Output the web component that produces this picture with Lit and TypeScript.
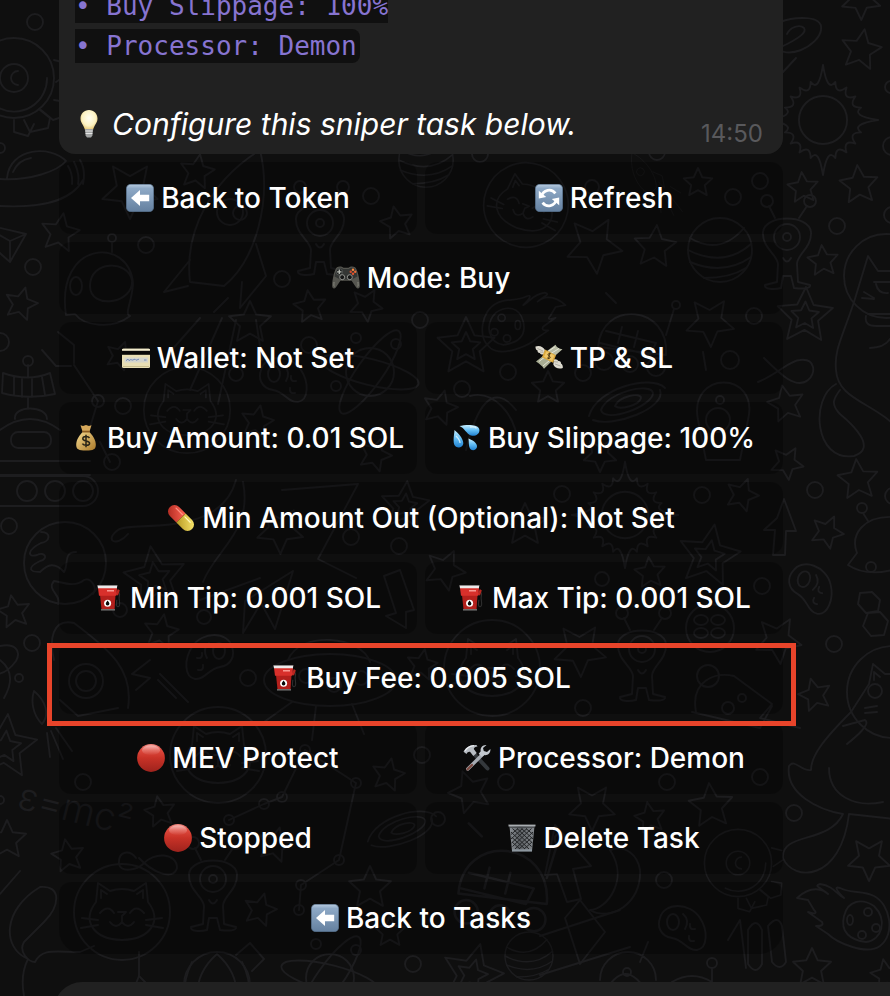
import { LitElement, html, css, svg } from "lit";
import { customElement } from "lit/decorators.js";
import { classMap } from "lit/directives/class-map.js";

type Icon = "back" | "refresh" | "gamepad" | "card" | "money" | "bag" | "drops" | "pill" | "pump" | "red" | "tools" | "bin" | "bulb";
interface Action { icon: Icon; label: string }
interface Row { actions: Action[]; marked?: boolean }

const ROWS: Row[] = [
  { actions: [{ icon: "back", label: "Back to Token" }, { icon: "refresh", label: "Refresh" }] },
  { actions: [{ icon: "gamepad", label: "Mode: Buy" }] },
  { actions: [{ icon: "card", label: "Wallet: Not Set" }, { icon: "money", label: "TP & SL" }] },
  { actions: [{ icon: "bag", label: "Buy Amount: 0.01 SOL" }, { icon: "drops", label: "Buy Slippage: 100%" }] },
  { actions: [{ icon: "pill", label: "Min Amount Out (Optional): Not Set" }] },
  { actions: [{ icon: "pump", label: "Min Tip: 0.001 SOL" }, { icon: "pump", label: "Max Tip: 0.001 SOL" }] },
  { actions: [{ icon: "pump", label: "Buy Fee: 0.005 SOL" }], marked: true },
  { actions: [{ icon: "red", label: "MEV Protect" }, { icon: "tools", label: "Processor: Demon" }] },
  { actions: [{ icon: "red", label: "Stopped" }, { icon: "bin", label: "Delete Task" }] },
  { actions: [{ icon: "back", label: "Back to Tasks" }] },
];

const tile = svg`
  <linearGradient id="tile" x1="0" y1="0" x2="0" y2="1">
    <stop offset="0" stop-color="#b9cce0"/><stop offset=".15" stop-color="#8ea9c6"/><stop offset="1" stop-color="#64809f"/>
  </linearGradient>
  <rect x="0.3" y="0.3" width="27.4" height="27.4" rx="4.5" fill="url(#tile)" stroke="#56708d" stroke-width=".6"/>`;

const ICONS: Record<Icon, unknown> = {
  back: svg`${tile}<path d="M5 14 14 6v4.7h9.2v6.6H14V22z" fill="#fff"/>`,
  refresh: svg`${tile}
    <g fill="none" stroke="#fff" stroke-width="2.7"><path d="M6.600 12.400A7.700 7.700 0 0 1 20.400 9.400"/><path d="M21.400 15.600A7.700 7.700 0 0 1 7.600 18.600"/></g>
    <path d="M3.800 6.800v7.600l7.400-1.400z M24.200 21.200v-7.600l-7.400 1.400z" fill="#fff"/>`,
  gamepad: svg`
    <path d="M5 3.2c2-1 5-.8 6.500.6h5C18 2.400 21 2.200 23 3.200c2.500 1.600 5.200 14.400 4.800 19.400-.3 2.400-2.600 2.400-3.800.6L19.600 16.800H8.400L4 23.200c-1.200 1.800-3.500 1.800-3.800-.6C-.2 17.600 2.500 4.800 5 3.200z" fill="#55554f"/>
    <path d="M5.600 4.200c2-.8 4.400-.4 5.600.8h5.600c1.200-1.200 3.600-1.600 5.600-.8 1.800 1.400 2.600 5 3 8.400l-5.600 3H8.200l-5.600-3c.4-3.400 1.200-7 3-8.400z" fill="#343634"/>
    <circle cx="7.300" cy="7.800" r="3.300" fill="#202221" stroke="#777b78" stroke-width=".5"/>
    <path d="M7.300 5.600v4.400M5.100 7.800h4.400" stroke="#b8bbb4" stroke-width="1.300"/>
    <circle cx="21" cy="5.800" r="1.200" fill="#ff8a3c"/><circle cx="18.800" cy="7.800" r="1.200" fill="#d64b2b"/><circle cx="23.200" cy="7.800" r="1.200" fill="#f06c35"/><circle cx="21" cy="9.800" r="1.200" fill="#e84f2c"/>
    <circle cx="10.200" cy="13.200" r="2.500" fill="#151616" stroke="#a8aaa4" stroke-width=".8"/><circle cx="17.800" cy="13.200" r="2.500" fill="#151616" stroke="#a8aaa4" stroke-width=".8"/>
    <path d="M2 18c0 2-.4 4 .3 4.500M26 18c0 2 .4 4-.3 4.500" stroke="#8a8a80" stroke-width="1" fill="none"/>`,
  card: svg`
    <rect x="0" y="4.800" width="28" height="19.200" rx="1.500" fill="#e9dfb4"/>
    <rect x="0" y="4.800" width="28" height="2.500" rx="1" fill="#f4edcd"/><rect x="0" y="6.800" width="28" height="4" fill="#080808"/>
    <rect x="2.500" y="13.500" width="23.500" height="5" fill="#d4d5cd"/>
    <path d="M4 16.600l2-1.500 1 1.500 2-1.200 1 .8 3-1 1 1 3-1M22 16h2.500" stroke="#6b83b5" stroke-width=".9" fill="none"/>
    <path d="M1 22.500h26" stroke="#c9bf8f" stroke-width="1"/>`,
  money: svg`
    <path d="M.5 2.500c4-1.500 8 .4 9.500 3.500l-1 4.500c-2 .4-3.500-.2-4.200-1.500C3 9 2.400 7.800 2.600 6.600 1 6 .3 4.400.5 2.500z" fill="#dedbd0"/>
    <path d="M27.800 24c-4 1.500-8 0-9.500-3.500l.5-5c2-.8 4 .2 4.600 1.600 1.800-.2 2.800 1 2.600 2.400 1.400.8 2 2.600 1.800 4.500z" fill="#dedbd0"/>
    <path d="M10 8.500 20.500.8c1 2.600 3.600 4.200 7 4.500L18 13.500z" fill="#b9bca4"/>
    <path d="M1 17.500 10.500 10l8 5.500-9.500 9.300C7 21.500 4 19.500 1 17.500z" fill="#a9ae94"/>
    <path d="M13 7.500 20 2.800M16 9.500l8-5M4 17.500l7.500-5.800M8 22l8.500-7.200" stroke="#e4e5d6" stroke-width="1" fill="none"/>
    <path d="M10 5.500 21 11.200 18 18.800 7 13.200z" fill="#dba83c"/><path d="M11.400 7.200 19.400 11.400 17 17 9 12.800z" fill="#efc667"/>
    <path d="M15.800 9.800c-1.300-.8-2.900-.3-2.800 1 .2 1.300 2.200 1.300 2.200 2.600-.1 1.200-1.900 1.400-3 .5M14.800 8.700l-1.300 6.200" stroke="#4f3a14" stroke-width="1" fill="none"/>
    <path d="M2.500 4.500 8 7M5 8l3.500.3M25.500 22l-5.500-2M23 18l-4-.3" stroke="#8f8d83" stroke-width=".6"/>`,
  bag: svg`
    <linearGradient id="bag" x1="0" y1="0" x2="1" y2="1"><stop offset="0" stop-color="#f7dc92"/><stop offset="1" stop-color="#a97828"/></linearGradient>
    <path d="M8.500 1.300l2.500.7L14 1l3 1 2.500-.7-2 6.200h-7z" fill="#d6a85a"/>
    <path d="M11 7.500h6c3.500 3.500 7 8.500 6.800 13.500-.2 4.300-2.200 5.500-9.800 5.500S4.400 25.300 4.200 21C4 16 7.500 11 11 7.500z" fill="url(#bag)"/>
    <path d="M10.300 7.600h7.400" stroke="#8b5a1f" stroke-width="1.800"/>
    <path d="M17.500 14c-1.200-2-6.700-2-6.700.7 0 3 6.800 1.500 6.800 4.500 0 2.800-5.800 2.800-7.200.4M14 10.800v12.400" stroke="#292417" stroke-width="1.500" fill="none"/>`,
  drops: svg`
    <linearGradient id="water" x1="0" y1="0" x2="0" y2="1"><stop offset="0" stop-color="#c8efff"/><stop offset=".5" stop-color="#62bdf5"/><stop offset="1" stop-color="#1f7fce"/></linearGradient>
    <path d="M6.500 2c5-1 17-2.500 19.500 2.500 2 5-3.500 8.500-8 7C13.500 10 11.500 4 6.500 2z" fill="url(#water)"/>
    <path d="M1.500 6c3.500 3 9.500 9 8.700 14-.8 4.500-7.500 4.500-9 .5C-.2 16.500 1.300 10 1.500 6z" fill="url(#water)"/>
    <path d="M15.500 14.500c4 1.500 9 4.500 8.500 8.500-.6 3.600-5.600 4.200-7.200 1.300-1.300-2.600-.8-6.500-1.300-9.800z" fill="url(#water)"/>
    <path d="M17 3c3-.5 5.500-.2 6.500 1.300M3 12c2.500 2.500 4 4.500 4 7" stroke="#e6f9ff" stroke-width="1.300" fill="none" opacity=".8"/>`,
  pill: svg`
    <linearGradient id="pr" x1="0" y1="1" x2="1" y2="0"><stop offset="0" stop-color="#a8251c"/><stop offset="1" stop-color="#ff6353"/></linearGradient>
    <linearGradient id="py" x1="0" y1="1" x2="1" y2="0"><stop offset="0" stop-color="#b79a24"/><stop offset="1" stop-color="#ffed73"/></linearGradient>
    <g transform="rotate(45 14 14)"><path d="M14 7.500H4.800a6.500 6.500 0 0 0 0 13H14z" fill="url(#pr)"/><path d="M14 7.500h9.200a6.500 6.500 0 0 1 0 13H14z" fill="url(#py)"/><path d="M3.500 10.500h9" stroke="#ff9184" stroke-width="1.200" stroke-linecap="round"/><path d="M16 10.500h7.500" stroke="#fff8b8" stroke-width="1.200" stroke-linecap="round"/></g>`,
  pump: svg`
    <path d="M22 8c2.500 0 3 1.500 2.300 4-.8 3 .8 6 .3 9-.4 2.300-3 2-3.200-.2l.4-5" fill="none" stroke="#2e2e2e" stroke-width="1.100"/>
    <path d="M20.500 10.500 22.800 5l2 1.500-1.800 5z" fill="#b92720"/>
    <path d="M5 11h15.500l-1 14.500h-13z" fill="#b3201c"/><path d="M3 4h19l-.6 7.800H4z" fill="#d8302b"/>
    <path d="M2.500 1.800h19.800l-.4 2.500H3z" fill="#eceaea"/><path d="M2.500 1.500h19.800" stroke="#8c8787" stroke-width="1"/>
    <path d="M12 6.800h7" stroke="#ffaaa3" stroke-width="1.300"/><path d="M6 25.800h14" stroke="#70706f" stroke-width="1.500"/>
    <circle cx="12.600" cy="19.200" r="3.500" fill="#fff"/><path d="M12.600 16.400c1 1.400 1.800 2.300 1.800 3.300a1.800 1.800 0 0 1-3.600 0c0-1 .8-1.900 1.800-3.300z" fill="#080808"/>`,
  red: svg`
    <linearGradient id="red" x1="0" y1="0" x2="0" y2="1"><stop offset="0" stop-color="#f0867e"/><stop offset=".2" stop-color="#df4a3e"/><stop offset=".5" stop-color="#c83227"/><stop offset="1" stop-color="#9e231d"/></linearGradient>
    <linearGradient id="shine" x1="0" y1="0" x2="0" y2="1"><stop offset="0" stop-color="#fff" stop-opacity=".45"/><stop offset="1" stop-color="#fff" stop-opacity="0"/></linearGradient>
    <circle cx="14" cy="14" r="13.900" fill="url(#red)"/><ellipse cx="14" cy="6.300" rx="9" ry="5" fill="url(#shine)"/>`,
  tools: svg`
    <path d="M12 11 24.500 24.500" stroke="#34383c" stroke-width="4" stroke-linecap="round"/>
    <path d="M20 10 4.800 25" stroke="#a6abb2" stroke-width="3.400" stroke-linecap="round"/><path d="M9 21 4.500 25.300" stroke="#7d4b42" stroke-width="2.400" stroke-linecap="round"/>
    <path d="M.5 7.800C2.500 3.500 7 .5 13.500 1l1 1.500c-2 .3-3.500 1.200-3.700 2.500l2.900 4-3.400 3-3.300-4.200c-1.800-.3-2.500.5-3.500 2.300z" fill="#b6bbc1"/>
    <path d="M2 7c2-3.500 5-5 9-5.300" stroke="#edf0f4" stroke-width="1.200" fill="none"/>
    <path d="M23.500 1c-3.500-.5-6.500 2.500-5.800 6.200l-2 2.600 3 3 2.800-1.700c3.500.4 6.300-2.500 5.900-6.200l-3.400 3-3.200-.8-.8-3z" fill="#c2c8ce"/>`,
  bin: svg`
    <linearGradient id="bin"><stop offset="0" stop-color="#8b9095"/><stop offset=".4" stop-color="#5d6165"/><stop offset="1" stop-color="#85898d"/></linearGradient>
    <path d="M1.500 2h25L24 27H4z" fill="url(#bin)"/>
    <path d="M4.500 4.500l19 18M9 4.500 24.500 19M13.500 4.500 25 15M18 4.500l7 6M3 8l18 17M3.500 13 17 25M4 18l8 7M23.500 4.500l-19 18M19 4.500 3.500 19M14.500 4.500 3 15M10 4.500l-7 6M25 8 7 25M24.500 13 11 25M24 18l-8 7" stroke="#232527" stroke-width="1" fill="none"/>
    <path d="M.5 1.500h27" stroke="#aaaeb2" stroke-width="1.800"/><path d="M2 3.200h24" stroke="#393c3f" stroke-width="1"/><path d="M4 26.500h20" stroke="#8d979f" stroke-width="2.200"/>`,
  bulb: svg`
    <radialGradient id="bulb" cx=".5" cy=".4" r=".6"><stop offset="0" stop-color="#fffef2"/><stop offset=".65" stop-color="#fcf2c2"/><stop offset="1" stop-color="#e6c674"/></radialGradient>
    <path d="M14 0c5 0 8.500 3.800 8.500 8.500 0 4.800-3.300 6.300-4.500 11.500h-8C8.800 14.800 5.500 13.300 5.500 8.500 5.500 3.800 9 0 14 0z" fill="url(#bulb)"/>
    <path d="M10 19h8l-.6 6.500-1.400 2h-4l-1.400-2z" fill="#a2a4a4"/><path d="M10.300 21h7.400M10.600 23.500h6.800" stroke="#e5e6e6" stroke-width="1"/>`,
};

const icon = (name: Icon) => html`<svg class="icon" viewBox="0 0 28 28" aria-hidden="true">${ICONS[name]}</svg>`;

/* Space doodles of the chat wallpaper: [x, y, radius, rotation] */
const STARS = [
  [861, 0, 20, 35], [861, 50, 21, 10], [803, 188, 16, -5], [859, 185, 20, -5], [823, 261, 16, -5], [786, 404, 19, -12], [787, 463, 17, 30],
  [858, 480, 21, -5], [827, 532, 17, 25], [815, 695, 17, -15], [869, 859, 22, 36], [812, 968, 20, 0], [886, 975, 16, -10],
  [60, 233, 20, 10], [21, 304, 17, 15], [14, 612, 17, -10], [7, 840, 20, 0], [68, 856, 17, -10], [160, 812, 16, -10],
  [388, 775, 17, 12], [275, 845, 18, 15], [370, 888, 22, 0], [260, 910, 17, 15], [390, 932, 16, 0],
  [470, 792, 22, -20], [592, 807, 24, 36], [650, 818, 16, -10], [711, 806, 23, -5],
  [130, 190, 29, 36], [197, 172, 18, 10], [250, 323, 22, 0], [310, 307, 17, -8], [366, 305, 17, 30], [397, 223, 17, -12],
  [120, 356, 15, 20], [257, 422, 17, 12], [375, 455, 17, 20], [594, 245, 29, 30], [655, 247, 22, 5], [698, 183, 15, 0],
  [710, 322, 25, 34], [548, 388, 17, 0], [440, 408, 18, 15], [600, 455, 17, 36], [280, 530, 24, 35], [161, 632, 18, 10],
  [445, 570, 21, 25], [650, 573, 16, -5], [742, 495, 17, 20], [580, 650, 27, 34], [778, 640, 24, 30], [525, 525, 22, 0], [422, 665, 16, 10],
];
const NESTED_STARS = [[805, 316, 29, 2], [5, 747, 33, 5], [472, 975, 32, 15], [466, 347, 30, 0], [155, 578, 32, -8], [709, 556, 32, 10], [405, 506, 25, 5]];
const DOTS = [
  [837, 226, 8], [815, 490, 8], [892, 215, 8], [893, 496, 8], [891, 87, 6], [892, 146, 9], [834, 644, 8], [794, 813, 8],
  [35, 22, 8], [33, 267, 8], [0, 342, 9], [0, 148, 5], [9, 526, 8], [32, 643, 8], [19, 678, 4], [0, 800, 4],
  [83, 782, 8], [422, 755, 8], [413, 964, 8], [506, 782, 8], [667, 782, 8], [760, 777, 8], [664, 880, 8], [438, 819, 7],
  [146, 245, 8], [371, 196, 8], [282, 279, 8], [240, 213, 7], [112, 238, 4], [123, 406, 8], [309, 345, 8], [236, 374, 7], [112, 462, 8],
  [733, 197, 8], [760, 181, 8], [592, 187, 7], [754, 316, 8], [508, 372, 8], [462, 389, 8], [730, 360, 9], [583, 373, 8], [657, 152, 8], [480, 154, 8], [420, 320, 8],
  [120, 610, 7], [204, 617, 7], [248, 678, 8], [351, 537, 8], [399, 546, 8], [562, 494, 8], [702, 495, 8], [602, 579, 7], [762, 586, 8], [583, 708, 8],
];

const starPath = (x: number, y: number, r: number, turn: number) => {
  const points: string[] = [];
  for (let i = 0; i < 10; i++) {
    const a = ((i * 36 + turn - 90) * Math.PI) / 180;
    const d = i % 2 ? r * 0.48 : r;
    points.push(`${(x + d * Math.cos(a)).toFixed(1)} ${(y + d * Math.sin(a)).toFixed(1)}`);
  }
  return `M${points.join("L")}Z`;
};
const sunPath = (x: number, y: number, r: number) => {
  let d = "";
  const n = 20;
  for (let i = 0; i <= n; i++) {
    const a = (i / n) * Math.PI * 2 - Math.PI / 2;
    const m = a - Math.PI / n;
    const far = i % 5 ? r * 1.38 : r * 1.9;
    const p = `${(x + far * Math.cos(a)).toFixed(1)} ${(y + far * Math.sin(a)).toFixed(1)}`;
    d += i ? `Q${(x + r * 0.95 * Math.cos(m)).toFixed(1)} ${(y + r * 0.95 * Math.sin(m)).toFixed(1)} ${p}` : `M${p}`;
  }
  return d;
};
const at = (x: number, y: number, body: unknown, more = "") => svg`<g transform=${`translate(${x} ${y}) ${more}`}>${body}</g>`;

const alien = svg`<path d="M-24-8C-22-26 22-26 24-8 25 8 10 14 10 24L11 42l12 3c1 4-8 4-16 3l-3-12h-8l-2 12c-8 2-17 1-16-3l12-3 1-18C-10 14-25 8-24-8z"/><circle r="13" cy="-3"/><circle r="4" cy="-3"/><path d="M-4 18q4 7 8 0M-12-22l-6-12M12-22l8-12"/><circle cx="-20" cy="-39" r="6"/><circle cx="23" cy="-39" r="6"/>`;
const spud = svg`<path d="M-22-8C-18-24 8-24 18-8 26 4 26 22 15 24 5 25 2 14-10 12-22 10-25 0-22-8z"/><ellipse cx="-9" cy="-4" rx="6" ry="8"/><path d="M1-12q7 6 2 15M8-2q-1 6 5 5M7 10q-1 6 5 5"/>`;
const stripes = svg`<circle r="32"/><path d="M-30-12Q0 6 24-22M-32 0Q4 18 31-6M-30 12Q4 26 31 7M-16 28Q10 28 26 18"/>`;
const galaxy = svg`<path d="M-38 14C-30-14 24-28 38-14M-34 18C-14 26 40 6 33-12M-26 8C-20-10 24-20 26-9 26 4-22 22-26 8M-12 4C-8-6 14-10 14-4 12 4-8 8-12 4"/>`;
const cat = svg`<circle r="48"/><path d="M-26-10-24-29-12-21Q0-25 12-21L24-29 26-10C40 8 30 27 0 28-30 27-40 8-26-10z"/><path d="M-21-14v-8l6 4M21-14v-8l-6 4M-22 1q8-9 14 0M8 1q6-9 14 0M-4 0H4L0 4V10M-12 10q6 8 12 0q6 8 12 0M-24 8l-16-2M-24 13l-17 3M24 8l16-2M24 13l17 3"/>`;
const comet = svg`<path d="M-45-22C-30-36-18-30-14-26-24-34-28-34-22-36-8-34-6-26 2-22-6-30-8-34-2-32 10-26 20-30 32-24 48-16 54 14 38 26 24 36-6 22-14 14L-26 6C-22 6-18 6-20 2L-34-8C-28-6-24-6-28-10L-34-20Z"/><path d="M2-4C6-20 20-22 32-14 46 0 40 20 24 22 8 20-2 12 2-4z"/><circle cx="26" cy="-8" r="4"/><circle cx="34" cy="8" r="4"/><circle cx="20" cy="15" r="4"/><ellipse cx="8" cy="0" rx="3" ry="5"/>`;
const atom = svg`<circle r="24"/><ellipse rx="50" ry="13" transform="rotate(14)"/><ellipse rx="50" ry="13" transform="rotate(-55)"/><circle cx="-34" cy="14" r="5"/><circle cx="26" cy="-28" r="5"/><circle cx="-14" cy="-34" r="5"/>`;
const gear = svg`<circle r="40"/><path d="M33 0A33 33 0 0 1-15 30M40-18l12 3M42 4l12-8M40 22l12 2-1 14-12 4-12-10M26 32l10 8-2 10-18 4-6-12M0 42v12l14 4 6-12"/><circle r="14"/><path d="M4-7A7 7 0 1 0 4 7"/>`;
const rocket = svg`<path d="M-28 62C-34 10-6-40 42-70 54-20 38 40 6 66zM-28 40l-26 32 24-6M38 24l10 32-26 32 2-26M-4 92l14-14M-18 98l-30 34M4 98l-32 72M18 100l-18 84M38 100l6 40"/><circle cx="12" cy="-8" r="13"/>`;
const rover = svg`<path d="M-32 12C-28-36 40-30 36 20zM-24-4 26 8 20 20-30 8M-8-8l-4 16M8-4 4 12M-14-32l-10-10M36 0l8-26"/><circle cx="-26" cy="26" r="9"/><circle cx="0" cy="29" r="8"/><circle cx="26" cy="32" r="9"/><circle cx="46" cy="-30" r="4"/>`;
const ufo = svg`<ellipse rx="66" ry="26"/><path d="M-42-20C-30-50 32-44 40-18M-38 22l-28 20M-14 26l-4 34M22 24l12 30"/><circle cx="-24" cy="-4" r="7"/><circle cx="4" cy="5" r="7"/><circle cx="31" cy="-2" r="7"/>`;
const floatingCat = svg`<circle r="46"/><path d="M-42 20-24-8-20-28-8-18H18M-19-12v-8l6 5M-42 20C-70 48-82 64-82 78-92 80-98 66-104 74-108 102-74 118-50 122-64 152-112 140-110 166-100 190-52 190-44 122L10 128M-64 76C-64 104-38 116-10 110M-50 34-28 28C-22 32-36 44-46 52"/><circle cx="-18" cy="-1" r="7"/><path d="M-28 16l12-2M-28 21l12-1"/>`;
const diver = svg`<circle r="42"/><path d="M-32 26-18-20-8-5H10M-32 26C-44 62-52 74-50 94-48 126-8 126 16 158M-50 108C-76 122-72 186-32 180-8 172-34 148-46 138-56 128-52 122-46 114M-12 6H10M-10 8q2 10 12 9M-22 16l10 6M-24 22l12 1M-18 38H6M-20 40q-2 10 10 10H8M-16 72Q0 72 6 60"/>`;

const wallpaper = html`<svg class="wallpaper" viewBox="0 0 890 996" preserveAspectRatio="xMinYMin slice" aria-hidden="true">
  <g class="doodles">
    ${STARS.map(([x, y, r, t]) => svg`<path d=${starPath(x, y, r, t)} />`)}
    ${NESTED_STARS.map(([x, y, r, t]) => svg`<path d=${starPath(x, y, r, t) + starPath(x, y, r * 0.5, t)} />`)}
    ${DOTS.map(([x, y, r]) => svg`<circle cx=${x} cy=${y} r=${r} />`)}
    ${[[823, 120, 29], [625, 515, 28]].map(([x, y, r]) => svg`<circle cx=${x} cy=${y} r=${r * 0.83} /><path d=${sunPath(x, y, r)} />`)}
    ${at(787, 240, alien)}${at(320, 226, alien)}${at(642, 652, alien)}${at(213, 882, alien)}
    ${at(811, 586, spud, "rotate(20)")}${at(283, 378, spud)}${at(210, 655, spud, "scale(-1 1)")}${at(682, 926, spud)}
    ${at(720, 250, stripes)}${at(426, 160, stripes, "scale(.85)")}${at(529, 956, stripes, "scale(.75)")}
    ${at(627, 402, galaxy)}${at(402, 829, galaxy, "scale(.9)")}
    ${at(122, 912, cat)}${at(492, 668, cat)}${at(187, 410, cat, "scale(.9)")}${at(526, 205, cat, "rotate(20) scale(.88)")}${at(218, 755, cat)}
    ${at(842, 920, comet)}${at(525, 325, comet, "scale(-.9 .9)")}
    ${at(370, 372, atom)}${at(330, 978, atom)}
    ${at(14, 78, gear)}${at(738, 863, gear, "scale(.84)")}
    ${at(218, 220, rocket)}${at(640, 176, rocket, "rotate(-50) scale(.3)")}
    ${at(630, 335, rover)}${at(500, 878, rover, "scale(1.300)")}
    ${at(330, 680, ufo)}
    ${at(893, 692, floatingCat)}${at(886, 276, diver)}
    <path d="M770 42C785 65 819 45 821 30 824 14 793 17 780 22M781 47C800 38 807 32 804 28 800 24 790 27 787 34M783 72l13-14"/>
    <path d="M777 518 784 499 796 531H786L785 555H773L775 530H764zM555 825l-10 50 12-1 10 28 14-3-8-30 18-3zM384 576l12 37-10 3 20 12 0-16 8-2-14-40z"/>
    <path d="M860 593l12-1 8 8-2 11-12 2-8-9zM868 613l12-1 8 9-4 14-13 1-8-10z"/><path d="M848 565c15 10 34 8 48 4M848 565l9-12C850 535 863 515 895 517M863 513l5 8"/><circle cx="862" cy="508" r="5"/><circle cx="871" cy="567" r="5"/>
    <path d="M0 179C30 181 58 171 66 161 51 145 10 147 7 178M0 206C38 208 70 203 83 180M68 166q5 8 4 18M74 162q6 12 4 22M80 160q6 10 3 24M13 172q5-12 18-14"/>
    <path d="M-8 226 26 234 10 262-8 246M26 234 10 241-6 232M10 241v20"/>
    <path d="M0 430Q30 408 60 430M15 419C13 405 47 405 47 419M3 373Q28 382 50 373L55 394Q28 400 2 393zM14 377v18M22 379v18M32 379v18M42 377l3 18M28 365v12M28 398v10M0 461H90M0 475H90M42 350l14 16h15M58 332l16 13v18"/><circle cx="28" cy="361" r="5"/><rect x="11" y="432" width="40" height="16" rx="7"/><rect x="-20" y="476" width="118" height="30" rx="15"/><circle cx="27" cy="491" r="10"/><circle cx="55" cy="491" r="10"/><circle cx="83" cy="491" r="10"/>
    <circle cx="65" cy="563" r="41"/><path d="M41 532c11 0 9 10 0 11-14 7-14 15-4 12 8-4 12 4 3 6-14 7-10 11 0 11 8-8 15-10 24 0 5-8-1-20 12-20M58 604c4-9-12-14-4-23 8 1 20 7 30-1 7-3 14 8 9 14"/>
    <path d="M0 646c14-3 22 4 16 15C8 672 0 674-4 674M0 660q18 14 4 38M34 691c12 10 16 24 8 33-10-10-11-24-8-33zM47 733l3 24M51 731l12 28M56 728l16 23M54 660c-5-20-2-42 20-37C110 650 134 670 128 708M60 700l18 16 40-8M150 660l-18 14 18 4-14 12M158 680l18 18M160 674l28 28"/><circle cx="86" cy="681" r="17"/><circle cx="86" cy="681" r="10"/>
    <path d="M0 894 20 871M28 959C2 948 2 910 40 887 62 885 60 906 44 922L24 942C18 952 29 962 35 962 42 948 55 952 80 952L94 946M28 959q-8 16-4 37M139 952v24l-8 20M139 976l16 16"/>
    <path d="M136 858c-6-8-18-8-17 6 2 9 18 6 24 0 10-12 34-12 34 4-4 14-26 3-38-10M764 358c16 16 32 32 44 22 8-6 8-22-8-20-10 0-22 14-42 22"/>
    <path d="M229 820 264 804 282 797 305 750 356 783 339 860 301 885 299 910M282 490l76-6M358 484l-40 75M318 559l38 19M540 936 620 910M540 975 630 947M74 365l24 36M98 401l-14 46"/>
    <circle cx="229" cy="820" r="5"/><circle cx="264" cy="804" r="5"/><circle cx="282" cy="797" r="5"/><circle cx="305" cy="750" r="5"/><circle cx="356" cy="783" r="5"/><circle cx="339" cy="860" r="5"/><circle cx="301" cy="885" r="5"/><circle cx="299" cy="910" r="5"/><circle cx="98" cy="401" r="6"/>
    <path d="M66 315C55 240 130 236 133 284 132 302 124 314 130 316 112 330 84 326 75 314zM90 286c0-26 38-26 42-6 2 24-42 30-42 6M112 252v-10"/><ellipse cx="76" cy="286" rx="6" ry="9"/>
    <path d="M236 480C220 540 130 520 118 530 104 540 116 548 128 534M243 482c10 50-28 68-40 100M110 462l-10-20M245 601l48-30-18 58-14-26-18 30zM200 600l60-22"/>
    <circle cx="217" cy="985" r="33"/><path d="M217 954c-16 14-20 28-20 42M217 954c16 14 20 28 20 42M192 962q-8 16-8 34M242 962q8 16 8 34M236 955l14-12 14 16-12 12"/>
    <circle cx="710" cy="628" r="24"/><ellipse cx="701" cy="620" rx="7" ry="5"/><ellipse cx="718" cy="620" rx="7" ry="5"/><ellipse cx="701" cy="633" rx="7" ry="5"/><ellipse cx="718" cy="633" rx="7" ry="5"/>
    <path d="M696 712C690 680 716 672 734 676L772 704 760 718 800 728M692 712l68 16 12-22"/><circle cx="708" cy="676" r="11"/><circle cx="728" cy="708" r="6"/><circle cx="742" cy="698" r="4"/>
    <path d="M600 980a28 28 0 0 1 56 0M603 996q22-44 46 0M640 962l8-20M672 982q20-12 40 0M712 982v-14M728 940l12-20 6 48M748 930q8-14 14 0v34q-6 12-14 0zM768 926q10-12 14 0l4 36q-6 10-14 0z"/><circle cx="627" cy="972" r="4"/><circle cx="712" cy="963" r="5"/>
    <path d="M610 850c20 30-4 60-20 60 20 12 52-6 50-40-2-14-14-26-30-20zM565 918l15-18 25 32-25 32zM516 410c-24-30-40-2-50 40M470 396c22-6 46 16 48 50M698 420c-10-50 62-50 50 0l-8 40h-34zM706 370l-3-18"/><circle cx="720" cy="400" r="4"/><circle cx="718" cy="420" r="12"/>
  </g>
  <text class="formula" x="16" y="808" transform="rotate(14 16 808)">ε=mc²</text>
</svg>`;

@customElement("app-root")
export class AppRoot extends LitElement {
  static styles = css`
    :host { display: block; color: #fff; font-family: Inter, "Noto Sans", sans-serif; }
    .chat { position: relative; display: flex; flex-direction: column; box-sizing: border-box; min-height: 100vh; overflow: hidden; background: #0f0f0f; }
    .wallpaper { position: absolute; inset: 0; width: 100%; height: 100%; }
    .doodles { fill: none; stroke: #1d1d1f; stroke-width: 1.9; stroke-linejoin: round; stroke-linecap: round; }
    .formula { font: 300 38px Inter, sans-serif; fill: #1d1d1f; }
    .thread { position: relative; margin: -14px 107px 28px 59px; }
    .bubble { background: #212121; border-radius: 0 0 16px 16px; padding: 0 20px 10px 16px; }
    .details { margin: 0 0 38px; font: 26px/40px "DejaVu Sans Mono", monospace; }
    code { font: inherit; color: #8774d1; background: #101010; padding: 2px 3px 2px 0; border-radius: 0 8px 8px 0; }
    .footer { display: flex; align-items: center; gap: 9px; }
    .hint { margin: 0; font-size: 30px; line-height: 40px; font-style: italic; flex: 1; }
    .footer time { font-size: 24px; line-height: 20px; color: #59595c; align-self: flex-end; }
    .icon { width: 28px; height: 28px; flex: none; }
    .keyboard { display: flex; flex-direction: column; gap: 8px; margin-top: 8px; }
    .row { position: relative; display: flex; gap: 8px; }
    .row button { flex: 1 1 0; min-width: 0; min-height: 72px; display: flex; align-items: center; justify-content: center; gap: 7px; border: 0; border-radius: 12px; padding: 0 8px; background: rgba(0, 0, 0, 0.28); color: #fff; font: 500 28px/32px Inter, "Noto Sans", sans-serif; white-space: nowrap; cursor: pointer; }
    .row:last-child button { border-radius: 12px 12px 24px 24px; }
    .row.marked::after { content: ""; position: absolute; inset: 1px -13px -12px -12px; border: 5px solid #e8442a; pointer-events: none; z-index: 1; }
    .next { position: relative; flex: 1; min-height: 40px; margin: 0 0 -26px 54px; border-top-left-radius: 28px; background: #212121; }
  `;

  render() {
    return html`<main class="chat">
      ${wallpaper}
      <section class="thread">
        <article class="bubble">
          <p class="details"><code>• Buy Slippage: 100%<br>• Processor: Demon</code></p>
          <div class="footer">${icon("bulb")}<p class="hint">Configure this sniper task below.</p><time>14:50</time></div>
        </article>
        <div class="keyboard">
          ${ROWS.map((row) => html`<div class=${classMap({ row: true, marked: !!row.marked })}>
            ${row.actions.map((a) => html`<button type="button">${icon(a.icon)}<span>${a.label}</span></button>`)}
          </div>`)}
        </div>
      </section>
      <div class="next"></div>
    </main>`;
  }
}
